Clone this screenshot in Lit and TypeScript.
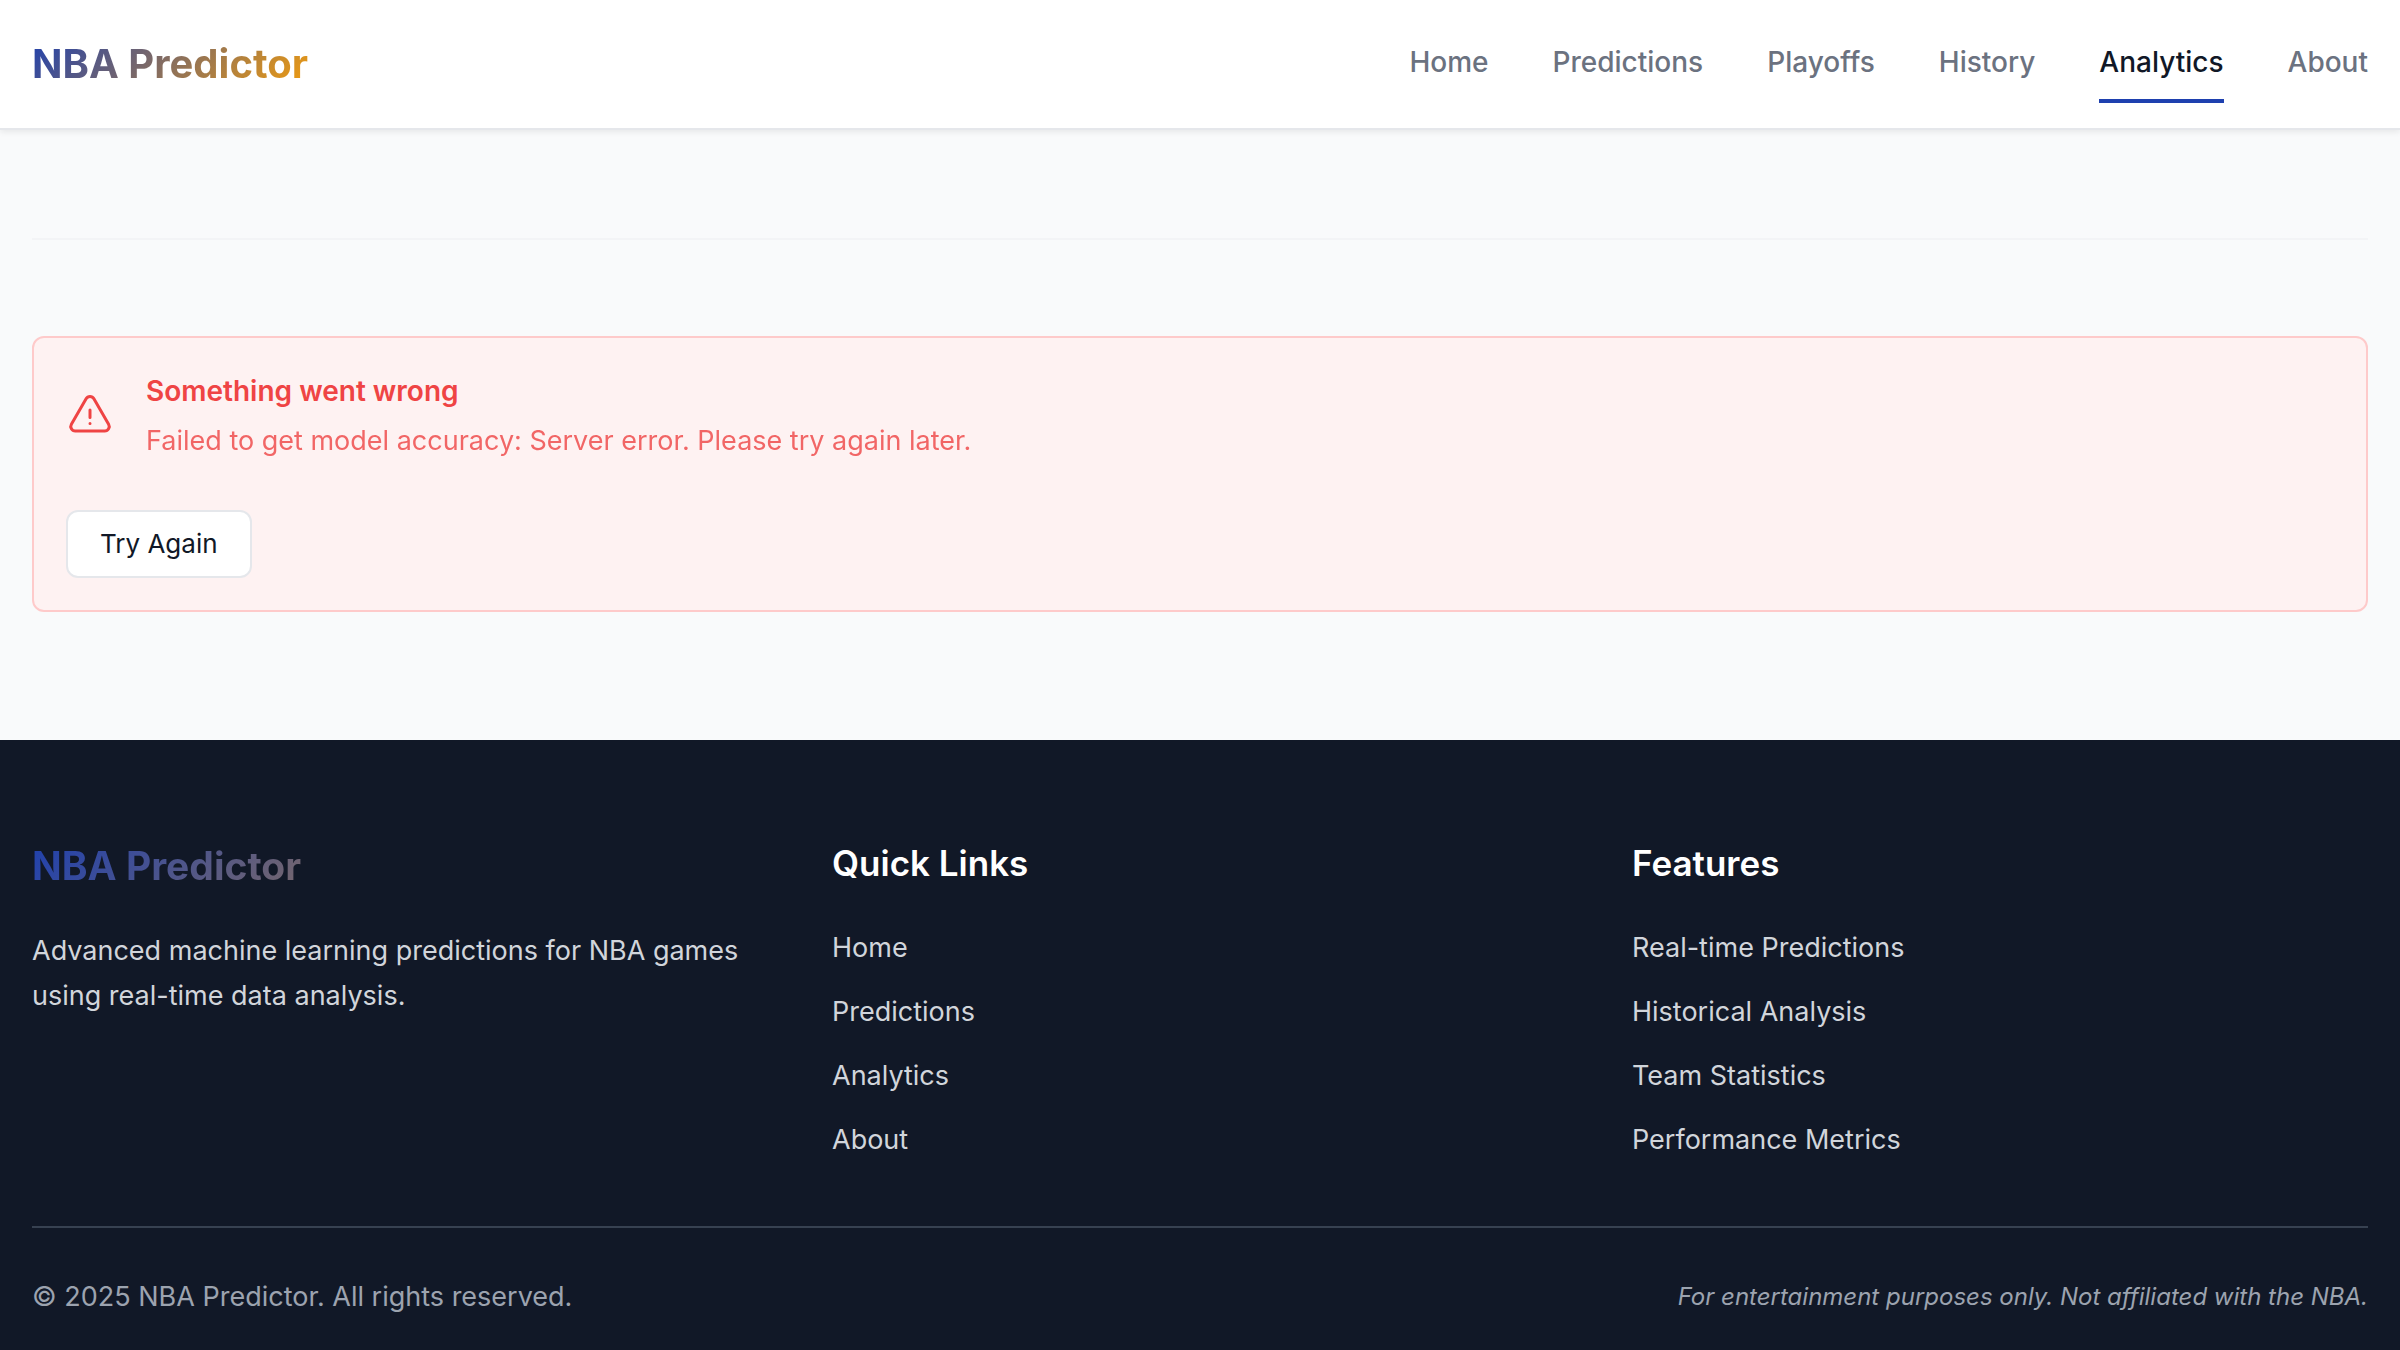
import { LitElement, html, css } from "lit";
import { customElement, state } from "lit/decorators.js";
import { classMap } from "lit/directives/class-map.js";

const NAV_ITEMS = ["Home", "Predictions", "Playoffs", "History", "Analytics", "About"];
const QUICK_LINKS = ["Home", "Predictions", "Analytics", "About"];
const FEATURES = [
  "Real-time Predictions",
  "Historical Analysis",
  "Team Statistics",
  "Performance Metrics",
];

@customElement("app-root")
export class AppRoot extends LitElement {
  static styles = css`
    :host {
      display: flex;
      flex-direction: column;
      min-height: 100vh;
      background: #f9fafb;
      color: #111827;
      font-family: Inter, "Liberation Sans", sans-serif;
      font-size: 27px;
      line-height: 42px;
      -webkit-font-smoothing: antialiased;
    }
    *,
    *::before,
    *::after {
      box-sizing: border-box;
    }
    h2,
    h3,
    p,
    ul {
      margin: 0;
      padding: 0;
    }
    ul {
      list-style: none;
    }
    a {
      color: inherit;
      text-decoration: none;
    }
    .header {
      display: flex;
      align-items: center;
      justify-content: space-between;
      height: 130px;
      padding: 0 32px;
      background: #ffffff;
      border-bottom: 2px solid #e5e7eb;
      box-shadow: 0 2px 6px rgba(0, 0, 0, 0.08);
    }
    .brand {
      font-size: 39px;
      line-height: 60px;
      font-weight: 700;
      background: linear-gradient(135deg, #1e40af 0%, #f59e0b 100%);
      -webkit-background-clip: text;
      background-clip: text;
      color: transparent;
    }
    .header .brand {
      font-size: 40px;
    }
    .nav {
      display: flex;
      gap: 64px;
    }
    .nav-link {
      padding: 16px 0;
      border-bottom: 4px solid transparent;
      font-size: 28px;
      font-weight: 500;
      color: #6b7280;
    }
    .nav-link.active {
      color: #111827;
      border-bottom-color: #1e40af;
    }
    .main {
      flex: 1;
      padding: 108px 32px 128px;
    }
    .divider {
      height: 2px;
      margin: 0 0 96px;
      border: 0;
      background: #f3f4f6;
    }
    .alert {
      padding: 32px;
      border: 2px solid #fecaca;
      border-radius: 12px;
      background: #fef2f2;
      color: #ef4444;
    }
    .alert-body {
      display: flex;
      align-items: center;
      gap: 32px;
      margin-bottom: 48px;
    }
    .alert-icon {
      flex: none;
      width: 48px;
      height: 48px;
    }
    .alert-text {
      display: flex;
      flex-direction: column;
      gap: 8px;
    }
    .alert-title {
      font-size: 28px;
      font-weight: 600;
    }
    .alert-message {
      opacity: 0.8;
    }
    .retry {
      display: block;
      height: 68px;
      padding: 0 32px;
      border: 2px solid #e5e7eb;
      border-radius: 12px;
      background: #ffffff;
      color: #111827;
      font: inherit;
      font-size: 26px;
      cursor: pointer;
    }
    .footer {
      padding: 96px 32px 32px;
      background: #111827;
      color: #d1d5db;
    }
    .columns {
      display: grid;
      grid-template-columns: repeat(3, 1fr);
      gap: 64px;
      margin-bottom: 60px;
    }
    .column {
      display: flex;
      flex-direction: column;
      gap: 32px;
    }
    .about {
      line-height: 45px;
    }
    .column-title {
      font-size: 35px;
      line-height: 54px;
      font-weight: 600;
      color: #ffffff;
    }
    .links {
      display: flex;
      flex-direction: column;
      gap: 12px;
      line-height: 52px;
    }
    .legal {
      display: flex;
      align-items: center;
      justify-content: space-between;
      padding-top: 48px;
      border-top: 2px solid #374151;
      color: #9ca3af;
    }
    .disclaimer {
      font-size: 24px;
      font-style: italic;
    }
  `;

  @state() private current = "Analytics";

  private select(event: Event, item: string) {
    event.preventDefault();
    this.current = item;
  }

  render() {
    return html`
      <header class="header">
        <a class="brand" href="#home">NBA Predictor</a>
        <nav class="nav" aria-label="Main">
          ${NAV_ITEMS.map(
            (item) => html`<a
              class=${classMap({ "nav-link": true, active: item === this.current })}
              href="#${item.toLowerCase()}"
              @click=${(e: Event) => this.select(e, item)}
              >${item}</a
            >`,
          )}
        </nav>
      </header>
      <main class="main">
        <hr class="divider" />
        <section class="alert" role="alert">
          <div class="alert-body">
            <svg
              class="alert-icon"
              viewBox="0 0 24 24"
              fill="none"
              stroke="currentColor"
              stroke-width="1.5"
              stroke-linecap="round"
              stroke-linejoin="round"
              aria-hidden="true"
            >
              <path
                d="M12 9v3.75m-9.303 3.376c-.866 1.5.217 3.374 1.948 3.374h14.71c1.73 0 2.813-1.874 1.948-3.374L13.949 3.378c-.866-1.5-3.032-1.5-3.898 0L2.697 16.126ZM12 15.75h.007v.008H12v-.008Z"
              />
            </svg>
            <div class="alert-text">
              <h3 class="alert-title">Something went wrong</h3>
              <p class="alert-message">
                Failed to get model accuracy: Server error. Please try again later.
              </p>
            </div>
          </div>
          <button class="retry" type="button">Try Again</button>
        </section>
      </main>
      <footer class="footer">
        <div class="columns">
          <div class="column">
            <h2 class="brand">NBA Predictor</h2>
            <p class="about">
              Advanced machine learning predictions for NBA games using real-time data analysis.
            </p>
          </div>
          <div class="column">
            <h3 class="column-title">Quick Links</h3>
            <ul class="links">
              ${QUICK_LINKS.map(
                (item) => html`<li><a href="#${item.toLowerCase()}">${item}</a></li>`,
              )}
            </ul>
          </div>
          <div class="column">
            <h3 class="column-title">Features</h3>
            <ul class="links">
              ${FEATURES.map((item) => html`<li>${item}</li>`)}
            </ul>
          </div>
        </div>
        <div class="legal">
          <p>© 2025 NBA Predictor. All rights reserved.</p>
          <p class="disclaimer">
            For entertainment purposes only. Not affiliated with the NBA.
          </p>
        </div>
      </footer>
    `;
  }
}
